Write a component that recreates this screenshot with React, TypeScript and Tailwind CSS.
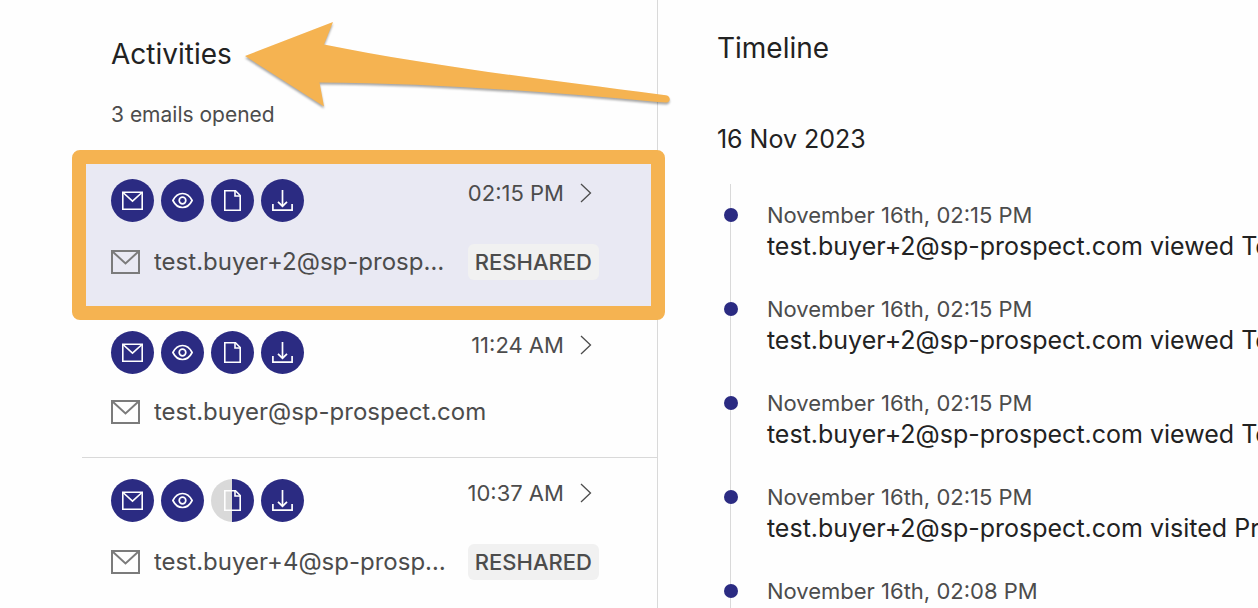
import React from 'react';
import clsx from 'clsx';

interface Activity {
  email: string;
  time: string;
  reshared?: boolean;
  partialDocument?: boolean;
  highlighted?: boolean;
}

interface TimelineEvent {
  date: string;
  text: string;
}

const activities: Activity[] = [
  { email: 'test.buyer+2@sp-prospect.com', time: '02:15 PM', reshared: true, highlighted: true },
  { email: 'test.buyer@sp-prospect.com', time: '11:24 AM' },
  { email: 'test.buyer+4@sp-prospect.com', time: '10:37 AM', reshared: true, partialDocument: true },
];

const events: TimelineEvent[] = [
  { date: 'November 16th, 02:15 PM', text: 'test.buyer+2@sp-prospect.com viewed Test' },
  { date: 'November 16th, 02:15 PM', text: 'test.buyer+2@sp-prospect.com viewed Test' },
  { date: 'November 16th, 02:15 PM', text: 'test.buyer+2@sp-prospect.com viewed Test' },
  { date: 'November 16th, 02:15 PM', text: 'test.buyer+2@sp-prospect.com visited Prospect' },
  { date: 'November 16th, 02:08 PM', text: 'test.buyer+2@sp-prospect.com visited Prospect' },
];

const MailIcon: React.FC = () => (
  <svg width="21" height="21" viewBox="0 0 21 21" fill="none" stroke="currentColor" strokeWidth="1.6">
    <path d="M.8 2.3h19.400v17H.8z" />
    <path d="M1 2.5l9.500 8.700L20 2.500" />
  </svg>
);

const EyeIcon: React.FC = () => (
  <svg width="21" height="21" viewBox="0 0 21 21" fill="none" stroke="currentColor" strokeWidth="1.7">
    <path d="M.9 10.500c2.300-4.600 5.400-7 9.600-7s7.300 2.400 9.600 7c-2.300 4.600-5.400 7-9.600 7S3.200 15.100.9 10.500z" />
    <circle cx="10.500" cy="10.500" r="3.300" />
  </svg>
);

const DocumentIcon: React.FC = () => (
  <svg width="21" height="21" viewBox="0 0 21 21" fill="none" stroke="currentColor" strokeWidth="1.6">
    <path d="M2.800 .8h10.700l4.700 4.700v14.700H2.800z" />
    <path d="M13 .8v5.200h5.200" />
  </svg>
);

const DownloadIcon: React.FC = () => (
  <svg width="21" height="21" viewBox="0 0 21 21" fill="none" stroke="currentColor" strokeWidth="1.7">
    <path d="M10.500 0v16" />
    <path d="M6 11.800l4.500 4.400 4.500-4.400" />
    <path d="M.9 14v6.100h19.200V14" />
  </svg>
);

const EnvelopeIcon: React.FC = () => (
  <svg className="shrink-0 text-[#7b7b7b]" width="29" height="24" viewBox="0 0 29 24" fill="none" stroke="currentColor" strokeWidth="2">
    <path d="M1 1h27v22H1z" />
    <path d="M1.500 1.500l13 12 13-12" />
  </svg>
);

const ChevronIcon: React.FC = () => (
  <svg width="12" height="20" viewBox="0 0 12 20" fill="none" stroke="currentColor" strokeWidth="1.3">
    <path d="M1 1l9.500 9L1 19" />
  </svg>
);

const StatusDot: React.FC<{ partial?: boolean; children: React.ReactNode }> = ({ partial, children }) => (
  <span
    className={clsx(
      'flex size-[43px] items-center justify-center rounded-full text-white',
      partial ? 'bg-linear-to-r from-[#d9d9d9] from-50% to-[#2b2b82] to-50%' : 'bg-[#2b2b82]',
    )}
  >
    {children}
  </span>
);

const ActivityRow: React.FC<{ activity: Activity }> = ({ activity }) => (
  <li className="relative border-b border-[#d9d9d9]">
    <button
      className={clsx(
        'flex w-full flex-col gap-[22px] pt-[21px] pr-[58px] pb-[29px] pl-[29px] text-left',
        activity.highlighted && 'bg-[#e9e9f3]',
      )}
    >
      <span className="flex w-full items-start justify-between">
        <span className="flex gap-[7px]">
          <StatusDot><MailIcon /></StatusDot>
          <StatusDot><EyeIcon /></StatusDot>
          <StatusDot partial={activity.partialDocument}><DocumentIcon /></StatusDot>
          <StatusDot><DownloadIcon /></StatusDot>
        </span>
        <span className="flex items-center gap-4 pr-[7px] text-[22px] leading-[28px]">
          {activity.time}
          <ChevronIcon />
        </span>
      </span>
      <span className="flex w-full items-center gap-3.5">
        <EnvelopeIcon />
        <span className="min-w-0 flex-1 truncate text-[24px] leading-[32px]">{activity.email}</span>
        {activity.reshared && (
          <span className="shrink-0 rounded-md bg-[#f1f1f1] px-[7px] text-[22px] leading-[36px] font-medium">RESHARED</span>
        )}
      </span>
    </button>
    {activity.highlighted && (
      <span className="pointer-events-none absolute -top-2 -right-2 -bottom-[11px] -left-2.5 z-10 rounded-lg border-14 border-[#f5b351]" />
    )}
  </li>
);

const Arrow: React.FC = () => (
  <svg
    className="pointer-events-none absolute top-4 left-60 z-20 drop-shadow-[0_2px_1px_rgba(0,0,0,0.35)]"
    width="440"
    height="100"
    viewBox="240 16 440 100"
    fill="#f5b351"
  >
    <path d="M245 56L333 22L324 44.500C420 64 530 78 660 94.500L666 95.200C671 96 671 102.500 666 102.500L658 102C550 92 430 83 319.500 82.500L324 106.500Z" />
  </svg>
);

const App: React.FC = () => {
  return (
    <main className="relative flex h-screen overflow-hidden bg-[#fefefe] font-[Inter,'Liberation_Sans',sans-serif] text-[#4c4c4c]">
      <section className="w-[52.3%] shrink-0 border-r border-[#d9d9d9] pt-9 pl-[82px]">
        <div className="pb-7 pl-[29px]">
          <h2 className="text-[28px] leading-[36px] text-[#222]">Activities</h2>
          <p className="pt-7 text-[21px] leading-[30px]">3 emails opened</p>
        </div>
        <ul>
          {activities.map((activity) => (
            <ActivityRow key={activity.email} activity={activity} />
          ))}
        </ul>
      </section>
      <section className="min-w-0 flex-1 pt-[30px] pl-[59px]">
        <h2 className="text-[28px] leading-[36px] text-[#222]">Timeline</h2>
        <h3 className="pt-14 pb-7 text-[25px] leading-[34px] text-[#222]">16 Nov 2023</h3>
        <ol className="ml-[13px] border-l border-[#d9d9d9] pt-4">
          {events.map((event, index) => (
            <li key={index} className="relative pb-8 pl-9 whitespace-nowrap">
              <span className="absolute top-2 -left-[7px] size-3.5 rounded-full bg-[#2b2b82]" />
              <p className="text-[22px] leading-[30px]">{event.date}</p>
              <p className="text-[25px] leading-[32px] text-[#222]">{event.text}</p>
            </li>
          ))}
        </ol>
      </section>
      <Arrow />
    </main>
  );
};

export default App;
